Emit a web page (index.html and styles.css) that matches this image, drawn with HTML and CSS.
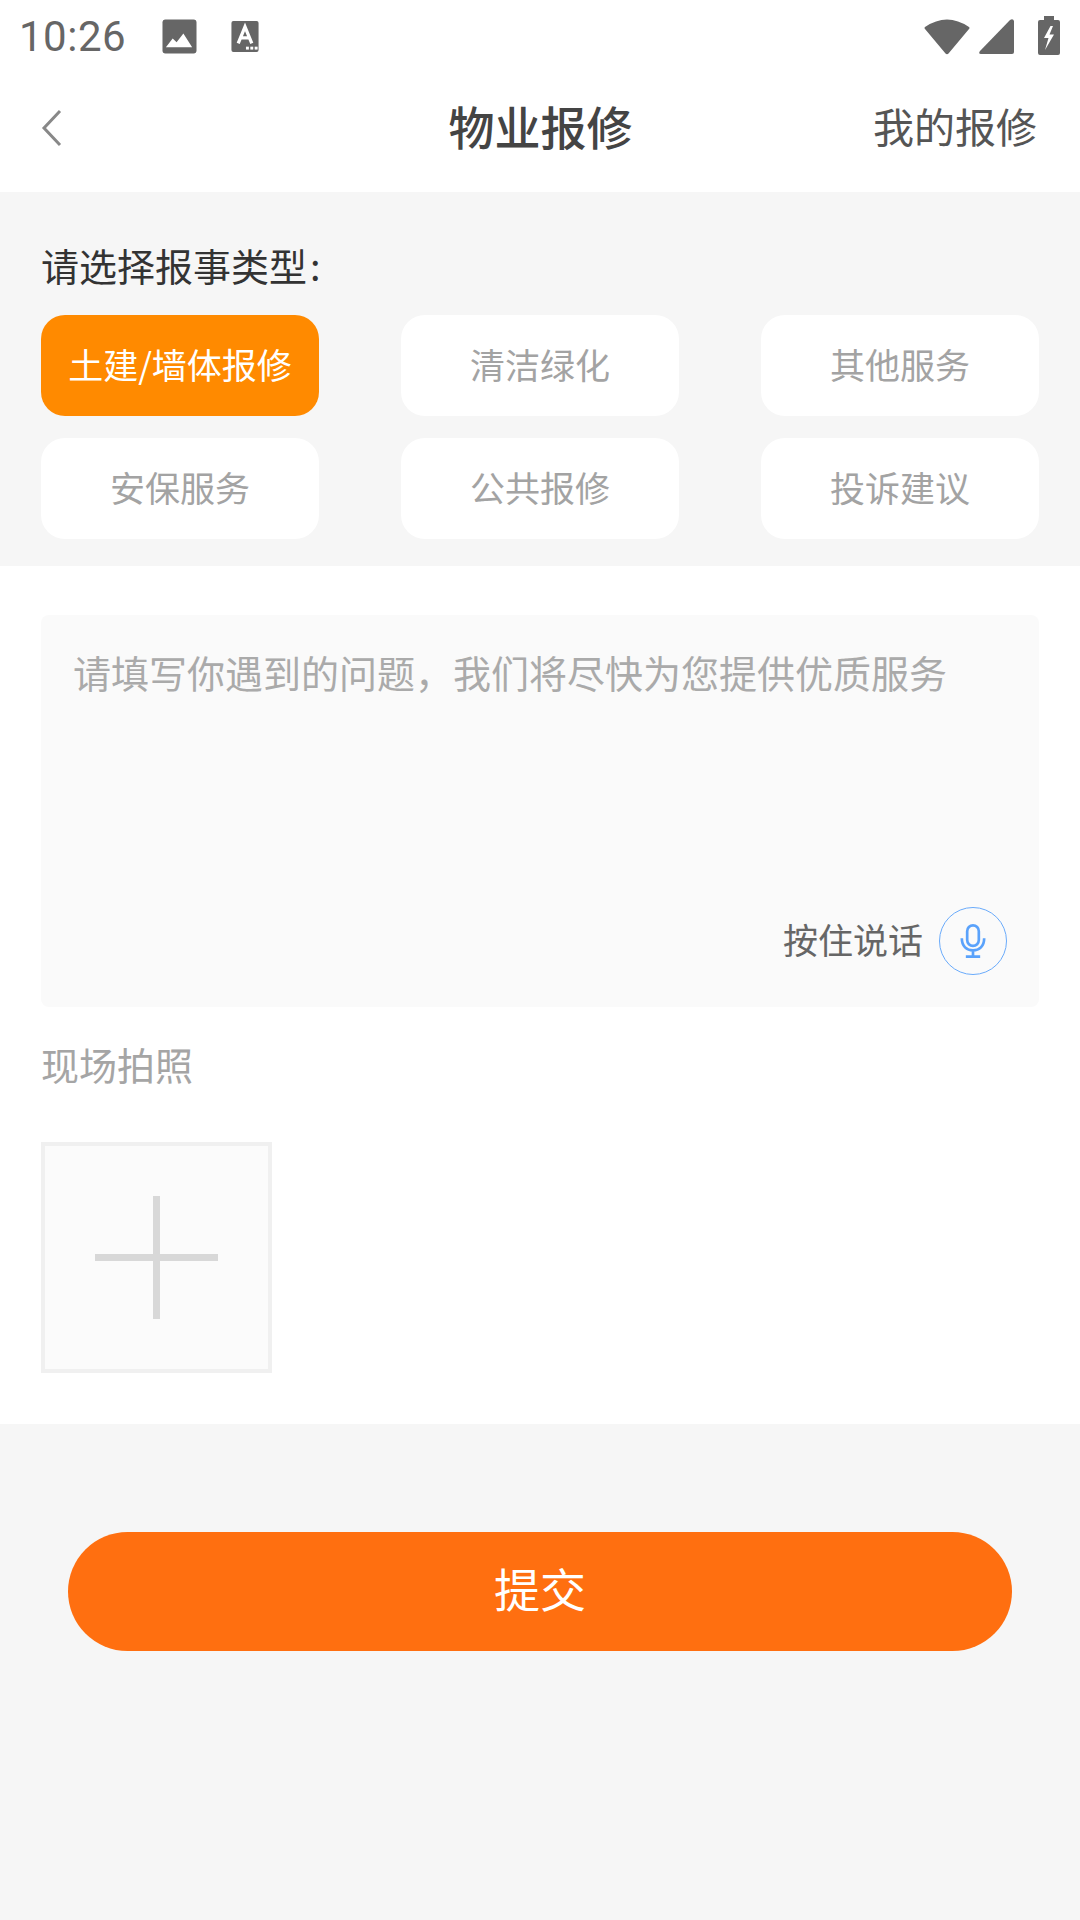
FILE: index.html
```html
<!DOCTYPE html>
<html lang="zh-CN">
<head>
    <meta charset="UTF-8">
    <meta name="viewport" content="width=device-width, initial-scale=1.0">
    <title>物业报修</title>
    <link rel="stylesheet" href="styles.css">
</head>
<body>
    <div class="status-bar">
        <div class="status-left">
            <span class="time">10:26</span>
            <svg class="icon-photo" width="35" height="35" viewBox="0 0 36 36">
                <rect x="0.5" y="0.5" width="35" height="35" rx="3" fill="#666"/>
                <path d="M4 29 L11 20 L15 24 L22 15 L31 29 Z" fill="#fff"/>
            </svg>
            <svg class="icon-text" width="28" height="31" viewBox="0 0 28 32">
                <rect width="28" height="32" rx="2" fill="#666"/>
                <path d="M7 23 L14 6 L21 23 M9.5 17.5 H18.5" fill="none" stroke="#fff" stroke-width="3.4"/>
                <rect x="15" y="26.5" width="3" height="3" fill="#fff"/>
                <rect x="19.5" y="26.5" width="3" height="3" fill="#fff"/>
                <rect x="24" y="26.5" width="3" height="3" fill="#fff"/>
            </svg>
        </div>
        <div class="status-right">
            <svg class="icon-wifi" width="46" height="37" viewBox="0 0 46 37">
                <path d="M1 9 Q23 -6 45 9 Q46 10 45 11 L24.500 35.500 Q23 37 21.500 35.500 L1 11 Q0 10 1 9 Z" fill="#666"/>
            </svg>
            <svg class="icon-signal" width="35" height="35" viewBox="0 0 35 35">
                <path d="M31 1 Q34 -1 35 2 V33 Q35 35 33 35 H2 Q-1 35 1 32 Z" fill="#666"/>
            </svg>
            <svg class="icon-battery" width="22" height="39" viewBox="0 0 22 39">
                <path d="M6 0 H16 V4 H20 Q22 4 22 6 V37 Q22 39 20 39 H2 Q0 39 0 37 V6 Q0 4 2 4 H6 Z" fill="#666"/>
                <path d="M12.500 10 L6 22 H10.500 L7 34 L16 18.500 H11.500 L15 10 Z" fill="#fff"/>
            </svg>
        </div>
    </div>

    <header class="nav">
        <svg class="back" width="22" height="38" viewBox="0 0 22 38">
            <path d="M19 2 L3 19 L19 36" fill="none" stroke="#888" stroke-width="3"/>
        </svg>
        <h1 class="nav-title">物业报修</h1>
        <span class="nav-link">我的报修</span>
    </header>

    <section class="types">
        <p class="types-label">请选择报事类型<span class="colon">:</span></p>
        <div class="type-grid">
            <div class="chip chip-active">土建/墙体报修</div>
            <div class="chip">清洁绿化</div>
            <div class="chip">其他服务</div>
            <div class="chip">安保服务</div>
            <div class="chip">公共报修</div>
            <div class="chip">投诉建议</div>
        </div>
    </section>

    <section class="form">
        <div class="problem">
            <p class="placeholder">请填写你遇到的问题，我们将尽快为您提供优质服务</p>
            <div class="voice">
                <span class="voice-text">按住说话</span>
                <span class="voice-btn">
                    <svg width="26" height="34" viewBox="0 0 28 38">
                        <rect x="7.500" y="1.500" width="13" height="23" rx="6.500" fill="none" stroke="#5aa2fb" stroke-width="3"/>
                        <path d="M1.500 16 C1.500 25 7 29.500 14 29.500 C21 29.500 26.500 25 26.500 16 M14 29.500 V36 M6 36.500 H22" fill="none" stroke="#5aa2fb" stroke-width="3"/>
                    </svg>
                </span>
            </div>
        </div>
        <p class="photo-label">现场拍照</p>
        <div class="photo-add"></div>
    </section>

    <div class="actions">
        <button class="submit">提交</button>
    </div>
</body>
</html>
```

FILE: styles.css
```css
* {
    box-sizing: border-box;
}

body {
    margin: 0;
    width: 1080px;
    height: 1920px;
    overflow: hidden;
    background-color: #f6f6f6;
    font-family: "Noto Sans CJK SC", "Noto Sans", sans-serif;
}

p, h1 {
    margin: 0;
}

/* Status bar */
.status-bar {
    height: 72px;
    background-color: #fff;
    display: flex;
    justify-content: space-between;
    align-items: center;
    padding: 0 20px 0 19px;
}

.status-left {
    display: flex;
    align-items: center;
}

.time {
    font-family: Roboto, sans-serif;
    font-size: 42px;
    color: #666;
    letter-spacing: 0.5px;
    width: 143px;
}

.icon-text {
    margin-left: 34px;
}

.status-right {
    display: flex;
    align-items: center;
}

.icon-signal {
    margin-left: 9px;
}

.icon-battery {
    margin-left: 24px;
    margin-top: -2px;
}

/* Nav */
.nav {
    height: 120px;
    background-color: #fff;
    display: flex;
    align-items: center;
    justify-content: space-between;
    padding: 0 43px 8px 41px;
    position: relative;
}

.nav-title {
    position: absolute;
    left: 1px;
    right: 0;
    top: 20px;
    text-align: center;
    font-size: 46px;
    line-height: 66px;
    font-weight: 500;
    color: #444;
}

.nav-link {
    font-size: 41px;
    line-height: 60px;
    margin-top: -6px;
    color: #555;
}

/* Type chips */
.types {
    height: 374px;
    padding: 45px 41px 0;
}

.types-label {
    font-size: 38px;
    line-height: 56px;
    color: #333;
    margin-bottom: 22px;
}

.colon {
    margin-left: 3px;
}

.type-grid {
    display: grid;
    grid-template-columns: repeat(3, 278px);
    justify-content: space-between;
    row-gap: 22px;
}

.chip {
    height: 101px;
    border-radius: 24px;
    background-color: #fff;
    color: #a3a3a3;
    font-size: 35px;
    padding-bottom: 5px;
    display: flex;
    align-items: center;
    justify-content: center;
}

.chip-active {
    background-color: #ff8a00;
    color: #fff;
}

/* Form */
.form {
    height: 858px;
    background-color: #fff;
    padding: 49px 41px 0;
}

.problem {
    height: 392px;
    background-color: #fafafa;
    border-radius: 8px;
    padding: 29px 32px 32px;
    display: flex;
    flex-direction: column;
    justify-content: space-between;
}

.placeholder {
    font-size: 38px;
    line-height: 56px;
    color: #aaa;
}

.voice {
    display: flex;
    align-items: center;
    justify-content: flex-end;
    gap: 16px;
}

.voice-text {
    font-size: 35px;
    line-height: 50px;
    margin-top: -5px;
    color: #666;
}

.voice-btn {
    width: 68px;
    height: 68px;
    border: 1.500px solid #6aabfb;
    border-radius: 50%;
    display: flex;
    align-items: center;
    justify-content: center;
}

.photo-label {
    font-size: 38px;
    line-height: 56px;
    color: #a5a5a5;
    margin-top: 29px;
    margin-bottom: 50px;
}

.photo-add {
    width: 231px;
    height: 231px;
    background-color: #fbfbfb;
    border: 4px solid #f0f0f0;
    position: relative;
}

.photo-add::before,
.photo-add::after {
    content: "";
    position: absolute;
    background-color: #d8d8d8;
}

.photo-add::before {
    left: 50px;
    top: 108px;
    width: 123px;
    height: 7px;
}

.photo-add::after {
    left: 108px;
    top: 50px;
    width: 7px;
    height: 123px;
}

/* Submit */
.actions {
    padding: 108px 68px 0;
}

.submit {
    display: block;
    width: 100%;
    height: 119px;
    border: none;
    border-radius: 60px;
    background-color: #ff6f10;
    color: #fff;
    font-family: inherit;
    font-size: 46px;
    line-height: 66px;
    padding: 0 0 9px;
}
```
